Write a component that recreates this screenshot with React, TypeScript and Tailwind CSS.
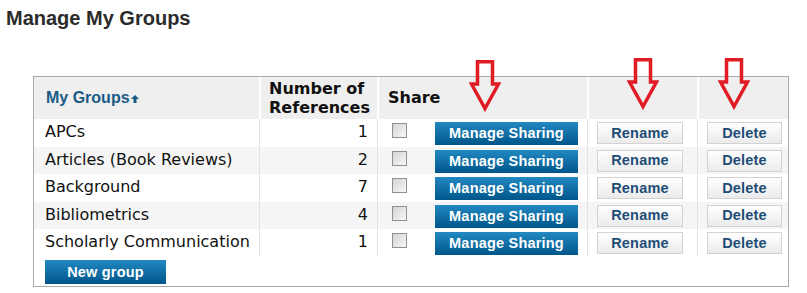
import React from "react";

type Group = { name: string; count: number };

const GROUPS: Group[] = [
  { name: "APCs", count: 1 },
  { name: "Articles (Book Reviews)", count: 2 },
  { name: "Background", count: 7 },
  { name: "Bibliometrics", count: 4 },
  { name: "Scholarly Communication", count: 1 },
];

const COLS = "grid grid-cols-[225px_118px_210px_110px_91px]";

function DownArrow({ className }: { className: string }) {
  return (
    <svg width="32" height="52" viewBox="0 0 32 52" fill="none" className={className}>
      <path
        d="M8.5 1.75H23.5V24H29.5L16 48.5L2.5 24H8.5Z"
        stroke="#e01b24"
        strokeWidth="3.5"
        strokeLinejoin="miter"
      />
    </svg>
  );
}

function BlueButton({ label, width }: { label: string; width: string }) {
  return (
    <button
      className={[
        "flex h-[23px] items-center justify-center bg-gradient-to-b from-[#2289c2] to-[#00568a]",
        "font-['Liberation_Sans',Arial,sans-serif] text-[14.5px] font-bold leading-none tracking-[0.2px] text-white",
        width,
      ].join(" ")}
    >
      {label}
    </button>
  );
}

function GrayButton({ label, width }: { label: string; width: string }) {
  return (
    <button
      className={[
        "flex h-[22px] items-center justify-center border border-[#d2d2d2] bg-gradient-to-b from-white to-[#ebebeb]",
        "font-['Liberation_Sans',Arial,sans-serif] text-[14.5px] font-bold leading-none tracking-[0.2px] text-[#1e4d75]",
        width,
      ].join(" ")}
    >
      {label}
    </button>
  );
}

export default function App() {
  return (
    <div className="relative h-[293px] w-[807px] overflow-hidden bg-white font-['DejaVu_Sans',sans-serif]">
      <h1 className="pl-[6px] pt-[7px] font-['Liberation_Sans',Arial,sans-serif] text-[20px] font-bold leading-[23px] text-[#2b2b2b]">
        Manage My Groups
      </h1>

      <div className="ml-[33px] mt-[46px] w-[756px] border border-[#a9a9a9]">
        {/* header */}
        <div className={`${COLS} h-[42px] bg-[#efefef] text-[16px] font-bold text-[#111]`}>
          <div className="flex items-center pl-[12px] font-['Liberation_Sans',Arial,sans-serif] text-[#1b5b86]">
            My Groups
            <svg width="8" height="8" viewBox="0 0 8 8" className="ml-[1px] mt-[2px]">
              <path d="M4 0L8 4H5.5V8H2.5V4H0Z" fill="#1b5b86" />
            </svg>
          </div>
          <div className="flex items-center border-l-2 border-white pl-[8px] leading-[19px]">
            Number of
            <br />
            References
          </div>
          <div className="flex items-center border-l-2 border-white pl-[9px]">Share</div>
          <div className="border-l-2 border-white" />
          <div className="border-l-2 border-white" />
        </div>

        {/* rows */}
        {GROUPS.map((g, i) => (
          <div
            key={g.name}
            className={`${COLS} h-[27.5px] text-[16px] leading-[19px] text-[#111] ${i % 2 === 1 ? "bg-[#f5f5f5]" : "bg-white"}`}
          >
            <div className="pl-[11px] pt-[3px]">{g.name}</div>
            <div className="border-l border-[#e3e3e3] pr-[9px] pt-[3px] text-right">{g.count}</div>
            <div className="flex items-start border-l border-[#e3e3e3] pl-[14px]">
              <input
                type="checkbox"
                className="mt-[4px] h-[15px] w-[15px] appearance-none border border-[#909090] bg-gradient-to-br from-[#d4d4d4] to-[#f8f8f8]"
              />
              <div className="ml-[28px] mt-[3px]">
                <BlueButton label="Manage Sharing" width="w-[143px]" />
              </div>
            </div>
            <div className="border-l border-[#e3e3e3] pl-[9px] pt-[3px]">
              <GrayButton label="Rename" width="w-[86px]" />
            </div>
            <div className="border-l border-[#e3e3e3] pl-[9px] pt-[3px]">
              <GrayButton label="Delete" width="w-[75px]" />
            </div>
          </div>
        ))}

        <div className="pb-[2px] pl-[11px] pt-[3.5px]">
          <BlueButton label="New group" width="w-[121px] h-[24px]" />
        </div>
      </div>

      {/* red annotation arrows */}
      <DownArrow className="absolute left-[469px] top-[60px]" />
      <DownArrow className="absolute left-[627px] top-[58px]" />
      <DownArrow className="absolute left-[718px] top-[58px]" />
    </div>
  );
}
